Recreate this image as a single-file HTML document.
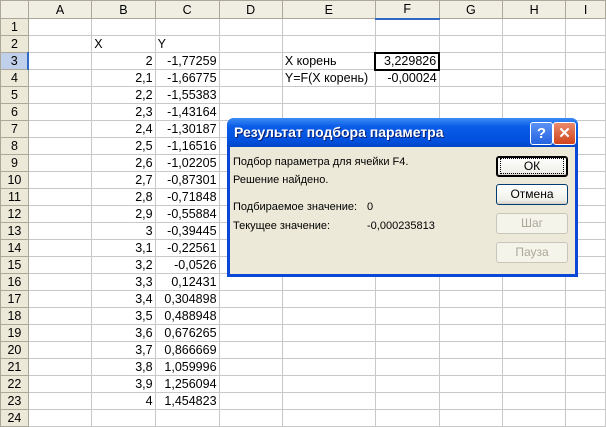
<!DOCTYPE html><html><head><meta charset="utf-8"><style>
body{margin:0;width:606px;height:411px;overflow:hidden;background:#fff;font-family:"Liberation Sans",Arial,sans-serif;position:relative}
table{border-collapse:collapse;table-layout:fixed;position:absolute;left:0;top:0}
td{border:1px solid #c8c8c8;height:16px;padding:0 2px;font-size:12.5px;white-space:nowrap;overflow:visible;line-height:14px;box-sizing:border-box}
tr{height:17px}
td.h{background:#ece9d8;border-color:#aca899;text-align:center;color:#000}
tr.hd{height:18px}
tr.hd td{height:18px;text-align:center;background:#f0eee2;border-color:#aca899}
td.sel{background:#c0d0ea}
.r{text-align:right}
#dlg{position:absolute;left:227px;top:118px;width:351px;height:159px;background:#0a47d6;border-radius:7px 7px 0 0}
#tb{position:absolute;left:0;top:0;width:351px;height:29px;border-radius:7px 7px 0 0;background:linear-gradient(#3b8cf5,#0a5ce8 30%,#0250dd 80%,#0346c4)}
#tt{position:absolute;left:7px;top:6px;color:#fff;font-weight:bold;font-size:14px;text-shadow:1px 1px #0a1e6e}
#body{position:absolute;left:3px;top:29px;width:345px;height:127px;background:#ece9d8;font-size:11px}
.t{position:absolute}
.b{position:absolute;left:266px;width:70px;height:19px;border:1px solid #003c74;border-radius:3px;background:linear-gradient(#fff,#f0f0ea 80%,#d6d0c5);text-align:center;font-size:12px;line-height:19px}
.dis{border-color:#c9c7ba;color:#aca899;background:#f5f4ea}
.ic{position:absolute;top:4px;width:21px;height:21px;border:1px solid #fff;border-radius:3px;color:#fff;font-weight:bold;text-align:center;line-height:21px;font-size:15px}
</style></head><body>
<table>
<colgroup><col style="width:28px"><col style="width:64px"><col style="width:64px"><col style="width:64px"><col style="width:64px"><col style="width:93px"><col style="width:64px"><col style="width:64px"><col style="width:64px"><col style="width:40px"></colgroup>
<tr class="hd"><td></td><td>A</td><td>B</td><td>C</td><td>D</td><td>E</td><td class="sel" style="border-bottom:2px solid #316ac5">F</td><td>G</td><td>H</td><td>I</td></tr>
<tr><td class="h">1</td><td></td><td></td><td></td><td></td><td></td><td></td><td></td><td></td><td></td></tr>
<tr><td class="h">2</td><td></td><td>X</td><td>Y</td><td></td><td></td><td></td><td></td><td></td><td></td></tr>
<tr><td class="h sel" style="border-right:2px solid #316ac5">3</td><td></td><td class="r">2</td><td class="r">-1,77259</td><td></td><td>X корень</td><td class="r" style="border:2px solid #000">3,229826</td><td></td><td></td><td></td></tr>
<tr><td class="h">4</td><td></td><td class="r">2,1</td><td class="r">-1,66775</td><td></td><td>Y=F(X корень)</td><td class="r">-0,00024</td><td></td><td></td><td></td></tr>
<tr><td class="h">5</td><td></td><td class="r">2,2</td><td class="r">-1,55383</td><td></td><td></td><td></td><td></td><td></td><td></td></tr>
<tr><td class="h">6</td><td></td><td class="r">2,3</td><td class="r">-1,43164</td><td></td><td></td><td></td><td></td><td></td><td></td></tr>
<tr><td class="h">7</td><td></td><td class="r">2,4</td><td class="r">-1,30187</td><td></td><td></td><td></td><td></td><td></td><td></td></tr>
<tr><td class="h">8</td><td></td><td class="r">2,5</td><td class="r">-1,16516</td><td></td><td></td><td></td><td></td><td></td><td></td></tr>
<tr><td class="h">9</td><td></td><td class="r">2,6</td><td class="r">-1,02205</td><td></td><td></td><td></td><td></td><td></td><td></td></tr>
<tr><td class="h">10</td><td></td><td class="r">2,7</td><td class="r">-0,87301</td><td></td><td></td><td></td><td></td><td></td><td></td></tr>
<tr><td class="h">11</td><td></td><td class="r">2,8</td><td class="r">-0,71848</td><td></td><td></td><td></td><td></td><td></td><td></td></tr>
<tr><td class="h">12</td><td></td><td class="r">2,9</td><td class="r">-0,55884</td><td></td><td></td><td></td><td></td><td></td><td></td></tr>
<tr><td class="h">13</td><td></td><td class="r">3</td><td class="r">-0,39445</td><td></td><td></td><td></td><td></td><td></td><td></td></tr>
<tr><td class="h">14</td><td></td><td class="r">3,1</td><td class="r">-0,22561</td><td></td><td></td><td></td><td></td><td></td><td></td></tr>
<tr><td class="h">15</td><td></td><td class="r">3,2</td><td class="r">-0,0526</td><td></td><td></td><td></td><td></td><td></td><td></td></tr>
<tr><td class="h">16</td><td></td><td class="r">3,3</td><td class="r">0,12431</td><td></td><td></td><td></td><td></td><td></td><td></td></tr>
<tr><td class="h">17</td><td></td><td class="r">3,4</td><td class="r">0,304898</td><td></td><td></td><td></td><td></td><td></td><td></td></tr>
<tr><td class="h">18</td><td></td><td class="r">3,5</td><td class="r">0,488948</td><td></td><td></td><td></td><td></td><td></td><td></td></tr>
<tr><td class="h">19</td><td></td><td class="r">3,6</td><td class="r">0,676265</td><td></td><td></td><td></td><td></td><td></td><td></td></tr>
<tr><td class="h">20</td><td></td><td class="r">3,7</td><td class="r">0,866669</td><td></td><td></td><td></td><td></td><td></td><td></td></tr>
<tr><td class="h">21</td><td></td><td class="r">3,8</td><td class="r">1,059996</td><td></td><td></td><td></td><td></td><td></td><td></td></tr>
<tr><td class="h">22</td><td></td><td class="r">3,9</td><td class="r">1,256094</td><td></td><td></td><td></td><td></td><td></td><td></td></tr>
<tr><td class="h">23</td><td></td><td class="r">4</td><td class="r">1,454823</td><td></td><td></td><td></td><td></td><td></td><td></td></tr>
<tr><td class="h">24</td><td></td><td></td><td></td><td></td><td></td><td></td><td></td><td></td><td></td></tr>
</table>
<div id="dlg">
<div id="tb"><div id="tt">Результат подбора параметра</div>
<div class="ic" style="left:303px;background:linear-gradient(#5a92f5,#2563e0)">?</div>
<div class="ic" style="left:326px;background:linear-gradient(#e98a6c,#d0431c)">✕</div></div>
<div id="body">
<div class="t" style="left:3px;top:9px">Подбор параметра для ячейки F4.</div>
<div class="t" style="left:3px;top:27px">Решение найдено.</div>
<div class="t" style="left:3px;top:54px">Подбираемое значение:</div>
<div class="t" style="left:137px;top:54px">0</div>
<div class="t" style="left:3px;top:73px">Текущее значение:</div>
<div class="t" style="left:137px;top:73px">-0,000235813</div>
<div class="b" style="top:9px;border:1px solid #000;box-shadow:inset 0 0 0 1px #000"><span style="outline:1px dotted #000;padding:0 23px">ОК</span></div>
<div class="b" style="top:37px">Отмена</div>
<div class="b dis" style="top:66px">Шаг</div>
<div class="b dis" style="top:95px">Пауза</div>
</div></div>
</body></html>
